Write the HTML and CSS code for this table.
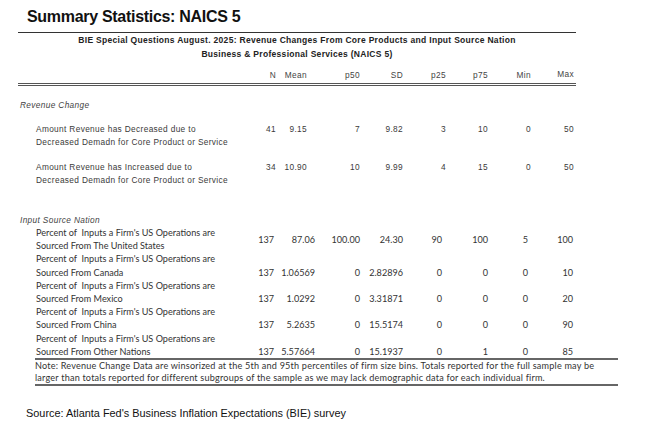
FILE: index.html
```html
<!DOCTYPE html>
<html>
<head>
<meta charset="utf-8">
<link rel="stylesheet" href="styles.css">
</head>
<body>
<div class="page">
  <h1 class="title">Summary Statistics: NAICS 5</h1>
  <div class="report">
    <div class="caption">
      <div>BIE Special Questions August. 2025: Revenue Changes From Core Products and Input Source Nation</div>
      <div>Business &amp; Professional Services (NAICS 5)</div>
    </div>
    <div class="grid head">
      <span></span><span>N</span><span>Mean</span><span>p50</span><span>SD</span><span>p25</span><span>p75</span><span>Min</span><span class="max">Max</span>
    </div>
    <div class="section">Revenue Change</div>
    <div class="grid row">
      <span class="label">Amount Revenue has Decreased due to<br>Decreased Demadn for Core Product or Service</span>
      <span>41</span><span>9.15</span><span>7</span><span>9.82</span><span>3</span><span>10</span><span>0</span><span>50</span>
    </div>
    <div class="grid row">
      <span class="label">Amount Revenue has Increased due to<br>Decreased Demadn for Core Product or Service</span>
      <span>34</span><span>10.90</span><span>10</span><span>9.99</span><span>4</span><span>15</span><span>0</span><span>50</span>
    </div>
    <div class="section section2">Input Source Nation</div>
  </div>
  <div class="lower">
    <div class="lgrid lrow mid">
      <span class="label">Percent of &nbsp;Inputs a Firm's US Operations are<br>Sourced From The United States</span>
      <span>137</span><span>87.06</span><span>100.00</span><span>24.30</span><span>90</span><span>100</span><span>5</span><span>100</span>
    </div>
    <div class="lgrid lrow">
      <span class="label">Percent of &nbsp;Inputs a Firm's US Operations are<br>Sourced From Canada</span>
      <span>137</span><span>1.06569</span><span>0</span><span>2.82896</span><span>0</span><span>0</span><span>0</span><span>10</span>
    </div>
    <div class="lgrid lrow">
      <span class="label">Percent of &nbsp;Inputs a Firm's US Operations are<br>Sourced From Mexico</span>
      <span>137</span><span>1.0292</span><span>0</span><span>3.31871</span><span>0</span><span>0</span><span>0</span><span>20</span>
    </div>
    <div class="lgrid lrow">
      <span class="label">Percent of &nbsp;Inputs a Firm's US Operations are<br>Sourced From China</span>
      <span>137</span><span>5.2635</span><span>0</span><span>15.5174</span><span>0</span><span>0</span><span>0</span><span>90</span>
    </div>
    <div class="lgrid lrow last">
      <span class="label">Percent of &nbsp;Inputs a Firm's US Operations are<br>Sourced From Other Nations</span>
      <span>137</span><span>5.57664</span><span>0</span><span>15.1937</span><span>0</span><span>1</span><span>0</span><span>85</span>
    </div>
    <div class="note">Note: Revenue Change Data are winsorized at the 5th and 95th percentiles of firm size bins. Totals reported for the full sample may be<br>larger than totals reported for different subgroups of the sample as we may lack demographic data for each individual firm.</div>
  </div>
  <p class="source">Source: Atlanta Fed's Business Inflation Expectations (BIE) survey</p>
</div>
</body>
</html>
```

FILE: styles.css
```css
html, body {
  margin: 0;
  padding: 0;
  background: #ffffff;
}

.page {
  width: 650px;
  height: 433px;
  overflow: hidden;
  font-family: "Liberation Sans", Arial, sans-serif;
}

.title {
  margin: 0;
  padding: 9px 0 0 27px;
  height: 24px;
  box-sizing: border-box;
  font-family: "Liberation Sans", Arial, sans-serif;
  font-weight: bold;
  font-size: 16px;
  line-height: 16px;
  letter-spacing: -0.3px;
  color: #111;
}

.report {
  margin-left: 18px;
  width: 558px;
  margin-top: 8px;
  border-top: 1px solid #333;
  color: #3a3a3a;
  font-size: 8.3px;
  letter-spacing: 0.35px;
}

.caption {
  text-align: center;
  font-family: "Liberation Sans", Arial, sans-serif;
  font-weight: bold;
  font-size: 8.5px;
  line-height: 14px;
  letter-spacing: 0.3px;
  color: #222;
}

.grid {
  display: grid;
  grid-template-columns: 232px 26px 31px 53px 43px 43px 42px 43px 43px 2px;
}

.grid > span:not(.label) {
  text-align: right;
}

.head {
  margin-top: 8px;
  line-height: 12px;
  padding-bottom: 2px;
  border-bottom: 3px double #555;
  color: #444;
}

.head .max {
  position: relative;
  top: -1px;
}

.section {
  margin-top: 13px;
  line-height: 12px;
  font-style: italic;
  color: #444;
  padding-left: 2px;
}

.row {
  margin-top: 12px;
  line-height: 13px;
}

.row .label {
  padding-left: 18px;
}

.section2 {
  margin-top: 28px;
  line-height: 11px;
}

.lower {
  margin-left: 35px;
  width: 583px;
  font-family: Lato, "Open Sans", sans-serif;
  font-size: 9.1px;
  color: #333;
}

.lgrid {
  display: grid;
  grid-template-columns: 215px 24px 41px 45px 43px 39px 46px 40px 45px 45px;
  align-items: end;
}

.lgrid > span:not(.label) {
  text-align: right;
  line-height: 13.2px;
}

.lgrid.mid {
  align-items: center;
}

.lrow .label {
  padding-left: 1px;
  line-height: 13.2px;
}

.lrow.last {
  border-bottom: 2px solid #666;
}

.note {
  line-height: 12px;
  letter-spacing: 0.2px;
  border-bottom: 2px solid #666;
}

.source {
  margin: 21px 0 0 26px;
  font-size: 10.9px;
  line-height: 12px;
  color: #111;
}
```
